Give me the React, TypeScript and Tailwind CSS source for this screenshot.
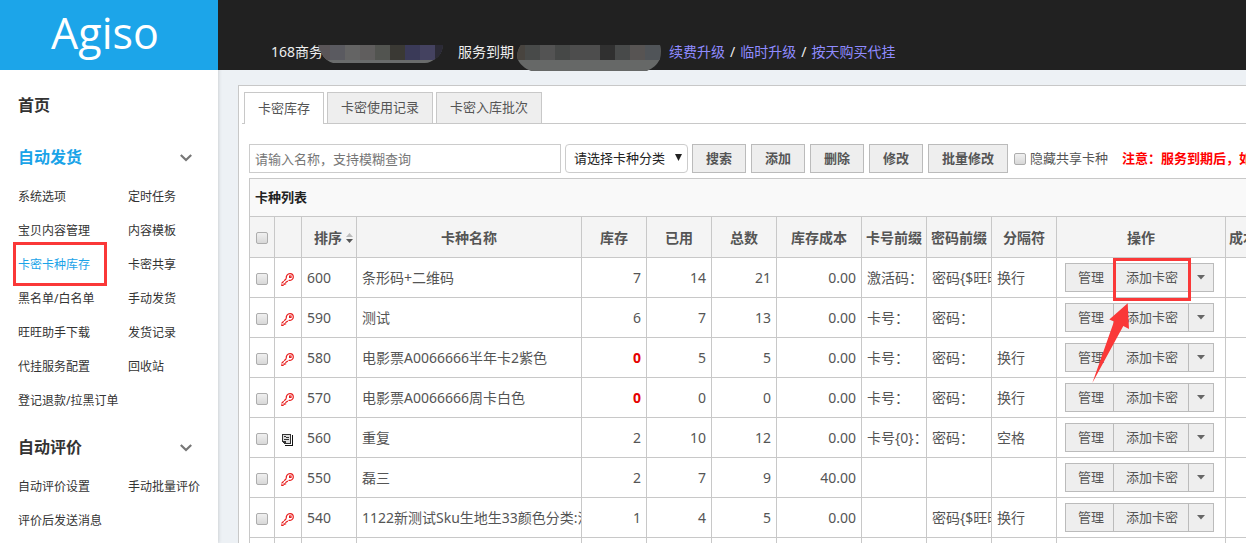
import type { ReactNode } from "react";

type MenuItem = { label: string; active?: boolean };

type Row = {
  sort: string;
  name: string;
  stock: number;
  used: number;
  total: number;
  cost: string;
  cardPrefix: string;
  pwdPrefix: string;
  separator: string;
  icon?: "key" | "doc";
};

const deliveryMenu: MenuItem[] = [
  { label: "系统选项" },
  { label: "定时任务" },
  { label: "宝贝内容管理" },
  { label: "内容模板" },
  { label: "卡密卡种库存", active: true },
  { label: "卡密共享" },
  { label: "黑名单/白名单" },
  { label: "手动发货" },
  { label: "旺旺助手下载" },
  { label: "发货记录" },
  { label: "代挂服务配置" },
  { label: "回收站" },
  { label: "登记退款/拉黑订单" },
];

const reviewMenu: MenuItem[] = [
  { label: "自动评价设置" },
  { label: "手动批量评价" },
  { label: "评价后发送消息" },
];

const rows: Row[] = [
  { sort: "600", name: "条形码+二维码", stock: 7, used: 14, total: 21, cost: "0.00", cardPrefix: "激活码：", pwdPrefix: "密码{$旺旺", separator: "换行" },
  { sort: "590", name: "测试", stock: 6, used: 7, total: 13, cost: "0.00", cardPrefix: "卡号：", pwdPrefix: "密码：", separator: "" },
  { sort: "580", name: "电影票A0066666半年卡2紫色", stock: 0, used: 5, total: 5, cost: "0.00", cardPrefix: "卡号：", pwdPrefix: "密码：", separator: "换行" },
  { sort: "570", name: "电影票A0066666周卡白色", stock: 0, used: 0, total: 0, cost: "0.00", cardPrefix: "卡号：", pwdPrefix: "密码：", separator: "换行" },
  { sort: "560", name: "重复", stock: 2, used: 10, total: 12, cost: "0.00", cardPrefix: "卡号{0}：", pwdPrefix: "密码：", separator: "空格", icon: "doc" },
  { sort: "550", name: "磊三", stock: 2, used: 7, total: 9, cost: "40.00", cardPrefix: "", pwdPrefix: "", separator: "" },
  { sort: "540", name: "1122新测试Sku生地生33颜色分类:混", stock: 1, used: 4, total: 5, cost: "0.00", cardPrefix: "", pwdPrefix: "密码{$旺旺", separator: "换行" },
  { sort: "530", name: "", stock: 0, used: 0, total: 0, cost: "0.00", cardPrefix: "", pwdPrefix: "", separator: "" },
];

function Chevron() {
  return (
    <svg width="12" height="9" viewBox="0 0 12 9" fill="none" stroke="#777" strokeWidth="2.2" aria-hidden>
      <path d="M0.800 2 6 7l5.200-5" />
    </svg>
  );
}

function KeyIcon() {
  return (
    <svg width="13" height="13" viewBox="0 0 13 13" fill="none" stroke="#e81c1c" className="mt-1 ml-[6px]" aria-hidden>
      <path d="M5.300 5.600C4.800 2.600 6.600.7 9 .7c2 0 3.300 1.300 3.300 3.200 0 2.200-2 3.900-4.600 3.500" strokeWidth="1.200" />
      <path d="M5.300 5.600.8 10.200v2.100h2.300v-1.400h1.500V9.600l3.100-2.200" strokeWidth="1.200" strokeDasharray="3 .7" />
      <rect x="8.500" y="2.900" width="1.600" height="1.600" />
    </svg>
  );
}

function DocIcon() {
  return (
    <svg width="11" height="12" viewBox="0 0 11 12" className="mt-1 ml-[7px]" shapeRendering="crispEdges" aria-hidden>
      <path d="M10 1h1v11H3v-1h7z" fill="#111" />
      <path d="M0 0h9v10H2V9H1V8H0z" fill="#333" />
      <path d="M1 1h7v8H3V8H1z" fill="#dcdcdc" />
      <path d="M2 2h2v1H2zM4 3h3v1H4zM2 5h5v1H2zM1 7h3v2H3V8H1z" fill="#333" />
    </svg>
  );
}

function SortIcon() {
  return (
    <svg width="7" height="10" viewBox="0 0 7 10" aria-hidden>
      <path d="M3.500 0 7 4H0z" fill="#bbb" />
      <path d="M0 6h7l-3.500 4z" fill="#555" />
    </svg>
  );
}

function CheckBox({ id, label }: { id?: string; label?: string }) {
  return (
    <input
      id={id}
      type="checkbox"
      aria-label={label}
      className="block size-3 shrink-0 appearance-none rounded-[2px] border border-[#adadad] bg-linear-to-b from-[#f0f0f0] to-[#d8d8d8]"
    />
  );
}

function ToolButton({ children }: { children: ReactNode }) {
  return (
    <button className="h-[29px] shrink-0 border border-[#bbb] bg-[#eee] px-[13px] text-[13px] font-bold text-[#555]">
      {children}
    </button>
  );
}

function MenuGroup({ title, items, active }: { title: string; items: MenuItem[]; active?: boolean }) {
  return (
    <section className="mt-[9px]">
      <h2 className={active ? "text-[#1aa3e8]" : "text-[#333]"}>
        <button className="flex h-10 w-full items-center justify-between pr-[26px] pl-[18px] text-base font-bold">
          {title}
          <Chevron />
        </button>
      </h2>
      <ul className="mt-[3px] grid grid-cols-[110px_1fr] pl-[18px] text-xs">
        {items.map((item) => (
          <li key={item.label} className="flex h-[34px] items-center whitespace-nowrap">
            <a href="#" className={item.active ? "relative text-[#1aa3e8]" : "text-[#333]"}>
              {item.label}
              {item.active && (
                <span className="pointer-events-none absolute -top-[15px] -left-[5px] h-11 w-[94px] border-3 border-[#fa3838]" />
              )}
            </a>
          </li>
        ))}
      </ul>
    </section>
  );
}

function NameMask() {
  const tiles = ["#5a5558", "#5a5a60", "#646464", "#605e5e", "#525450", "#3a3934", "#3a3a58", "#444260", "#2b2a36"];
  return (
    <svg width="125" height="18" viewBox="0 0 125 18" className="absolute top-[45px] left-[100px]" aria-hidden>
      <clipPath id="name-mask">
        <path d="M0 0h125c-1 7-3 11-8 14-3 2-6 4-10 4H15C7 16 3 9 0 0z" />
      </clipPath>
      <g clipPath="url(#name-mask)" shapeRendering="crispEdges">
        <rect width="125" height="18" fill="#6a6c6c" />
        {tiles.map((fill, i) => (
          <rect key={i} x={i * 15 - 3} width="15" height="15" fill={fill} />
        ))}
        <rect x="117" y="0" width="8" height="18" fill="#2b2a36" />
      </g>
    </svg>
  );
}

function DateMask() {
  const tiles = ["#48443f", "#484a49", "#535353", "#464847", "#4d4d4d", "#4d4d4d", "#303030", "#484a4a", "#575453", "#505458"];
  return (
    <svg width="144" height="26" viewBox="0 0 144 26" className="absolute top-[45px] left-[299px]" aria-hidden>
      <clipPath id="date-mask">
        <path d="M4 0h139c1 3 1 9 0 14-3 6-7 9-13 12H14C8 24 3 19 1 15-1 10 1 4 4 0z" />
      </clipPath>
      <g clipPath="url(#date-mask)" shapeRendering="crispEdges">
        <rect width="144" height="26" fill="#666867" />
        {tiles.map((fill, i) => (
          <rect key={i} x={i * 15 - 7} width="15" height="15" fill={fill} />
        ))}
      </g>
    </svg>
  );
}

function Highlight() {
  return (
    <>
      <span className="pointer-events-none absolute -top-[5px] left-0 z-10 h-[43px] w-[78px] border-3 border-[#fa3838]" />
      <svg width="38" height="82" viewBox="0 0 38 82" className="pointer-events-none absolute top-[39px] -left-[22px] z-10" aria-hidden>
        <path d="M36.700 1.300 38 27l-5.700-3L1.300 81 23 19.500l-4.700-2z" fill="#fa3838" />
      </svg>
    </>
  );
}

function RowActions({ highlighted }: { highlighted: boolean }) {
  return (
    <div className="flex h-[29px] w-[149px] border border-[#bbb] bg-[#eee] text-[13px]">
      <button className="pr-[9px] pl-3">管理</button>
      <div className="relative -my-px flex">
        <button className="border border-r-0 border-[#bbb] pr-2.5 pl-3">添加卡密</button>
        {highlighted && <Highlight />}
      </div>
      <button aria-label="更多操作" className="flex flex-1 items-center justify-center border-l border-[#bbb]">
        <svg width="8" height="5" viewBox="0 0 8 5" aria-hidden>
          <path d="M0 0h8L4 4.500z" fill="#666" />
        </svg>
      </button>
    </div>
  );
}

const tabs = ["卡密库存", "卡密使用记录", "卡密入库批次"];
const td = "overflow-hidden border border-[#c8c8c8] px-[5px] whitespace-nowrap";
const th = "border border-[#c8c8c8] p-0 pt-0.5 whitespace-nowrap";

export default function App() {
  return (
    <div className="flex h-screen overflow-hidden bg-[#edf1f5] font-['Noto_Sans','Noto_Sans_CJK_SC',sans-serif] text-[#555]">
      <aside className="z-10 w-[218px] shrink-0 bg-white shadow-[0_0_4px_rgba(0,0,0,0.2)]">
        <div className="flex h-[70px] items-center justify-center bg-[#1ca5e9] pr-2 pb-1 font-['Open_Sans',sans-serif] text-[43px] text-white">
          Agiso
        </div>
        <nav className="pt-[15px]">
          <a href="#" className="mb-3 flex h-10 items-center pl-[18px] text-base font-bold text-[#333]">
            首页
          </a>
          <MenuGroup title="自动发货" items={deliveryMenu} active />
          <MenuGroup title="自动评价" items={reviewMenu} />
        </nav>
      </aside>

      <div className="min-w-0 flex-1">
        <header className="relative z-20 h-[70px] bg-[#212121] text-sm whitespace-nowrap text-[#eee]">
          <div className="flex pt-[41px] pl-[53px] leading-[22px]">
            <span className="w-[187px]">168商务</span>
            <span className="w-[211px]">服务到期</span>
            <div className="flex gap-[5px]">
              <a href="#" className="text-[#8f8bff]">续费升级</a>
              <span>/</span>
              <a href="#" className="text-[#8f8bff]">临时升级</a>
              <span>/</span>
              <a href="#" className="text-[#8f8bff]">按天购买代挂</a>
            </div>
          </div>
          <NameMask />
          <DateMask />
        </header>

        <main className="pt-[15px] pl-5">
          <div className="overflow-hidden border-t border-l border-[#c8c8c8] bg-white pt-1.5">
            <div role="tablist" className="ml-[3px] flex gap-[3px] border-b border-[#c8c8c8] pl-0.5 text-[13px]">
              {tabs.map((tab, i) => (
                <button
                  key={tab}
                  role="tab"
                  aria-selected={i === 0}
                  className={
                    i === 0
                      ? "-mb-px h-8 border border-b-0 border-[#c8c8c8] bg-white px-[13px]"
                      : "h-[31px] border border-b-0 border-[#c8c8c8] bg-[#eee] px-[13px]"
                  }
                >
                  {tab}
                </button>
              ))}
            </div>

            <div className="pt-5 pl-2.5">
              <form className="flex items-center text-[13px] whitespace-nowrap">
                <input
                  type="text"
                  aria-label="卡种名称"
                  placeholder="请输入名称，支持模糊查询"
                  className="h-[29px] w-[312px] shrink-0 border border-[#ccc] px-[5px] placeholder:text-[#777]"
                />
                <div className="relative ml-1 shrink-0">
                  <select
                    aria-label="卡种分类"
                    className="h-[29px] w-[123px] appearance-none rounded-[4px] border border-[#ccc] bg-white pl-2 text-[#222]"
                  >
                    <option>请选择卡种分类</option>
                  </select>
                  <svg width="7" height="7" viewBox="0 0 7 7" className="pointer-events-none absolute top-[10px] right-1.5" aria-hidden>
                    <path d="M0 0h7L3.500 7z" fill="#222" />
                  </svg>
                </div>
                <div className="ml-1 flex shrink-0 gap-[5px]">
                  <ToolButton>搜索</ToolButton>
                  <ToolButton>添加</ToolButton>
                  <ToolButton>删除</ToolButton>
                  <ToolButton>修改</ToolButton>
                  <ToolButton>批量修改</ToolButton>
                </div>
                <div className="ml-1.5 flex items-center gap-1">
                  <CheckBox id="hide-shared" />
                  <label htmlFor="hide-shared">隐藏共享卡种</label>
                </div>
                <strong className="ml-3.5 text-[#f00]">注意：服务到期后，如需继续使用请及时续费</strong>
              </form>

              <h3 className="mt-[5px] flex h-[38px] items-center border-t border-l border-[#c8c8c8] bg-[#f9f9f9] pl-[5px] text-[13px] font-bold text-[#222]">
                卡种列表
              </h3>
              <table className="w-[1077px] table-fixed border-collapse text-sm">
                <colgroup>
                  <col className="w-[25px]" />
                  <col className="w-[27px]" />
                  <col className="w-[55px]" />
                  <col className="w-[225px]" />
                  <col className="w-[65px]" />
                  <col className="w-[65px]" />
                  <col className="w-[65px]" />
                  <col className="w-[85px]" />
                  <col className="w-[65px]" />
                  <col className="w-[65px]" />
                  <col className="w-[65px]" />
                  <col className="w-[169px]" />
                  <col className="w-[100px]" />
                </colgroup>
                <thead>
                  <tr className="h-[41px] bg-[#f4f4f4]">
                    <th className={`${th} pl-1.5`}>
                      <CheckBox label="全选" />
                    </th>
                    <th className={th} />
                    <th className={th}>
                      <div className="flex items-center justify-end gap-1 pr-[3px]">
                        排序
                        <SortIcon />
                      </div>
                    </th>
                    <th className={th}>卡种名称</th>
                    <th className={th}>库存</th>
                    <th className={th}>已用</th>
                    <th className={th}>总数</th>
                    <th className={th}>库存成本</th>
                    <th className={th}>卡号前缀</th>
                    <th className={th}>密码前缀</th>
                    <th className={th}>分隔符</th>
                    <th className={th}>操作</th>
                    <th className={`${th} pl-[3px] text-left`}>成本价</th>
                  </tr>
                </thead>
                <tbody>
                  {rows.map((row, i) => (
                    <tr key={row.sort} className="h-10">
                      <td className="border border-[#c8c8c8] p-0 pt-0.5 pl-1.5">
                        <CheckBox label={`选择 ${row.sort}`} />
                      </td>
                      <td className="border border-[#c8c8c8] p-0">{row.icon === "doc" ? <DocIcon /> : <KeyIcon />}</td>
                      <td className={td}>{row.sort}</td>
                      <td className={`${td} pr-0`}>{row.name}</td>
                      <td className={`${td} text-right ${row.stock === 0 ? "font-bold text-[#e60000]" : ""}`}>{row.stock}</td>
                      <td className={`${td} text-right`}>{row.used}</td>
                      <td className={`${td} text-right`}>{row.total}</td>
                      <td className={`${td} text-right`}>{row.cost}</td>
                      <td className={td}>{row.cardPrefix}</td>
                      <td className={td}>{row.pwdPrefix}</td>
                      <td className={td}>{row.separator}</td>
                      <td className="border border-[#c8c8c8] p-0 pl-2">
                        <RowActions highlighted={i === 0} />
                      </td>
                      <td className="border border-[#c8c8c8]" />
                    </tr>
                  ))}
                </tbody>
              </table>
            </div>
          </div>
        </main>
      </div>
    </div>
  );
}
